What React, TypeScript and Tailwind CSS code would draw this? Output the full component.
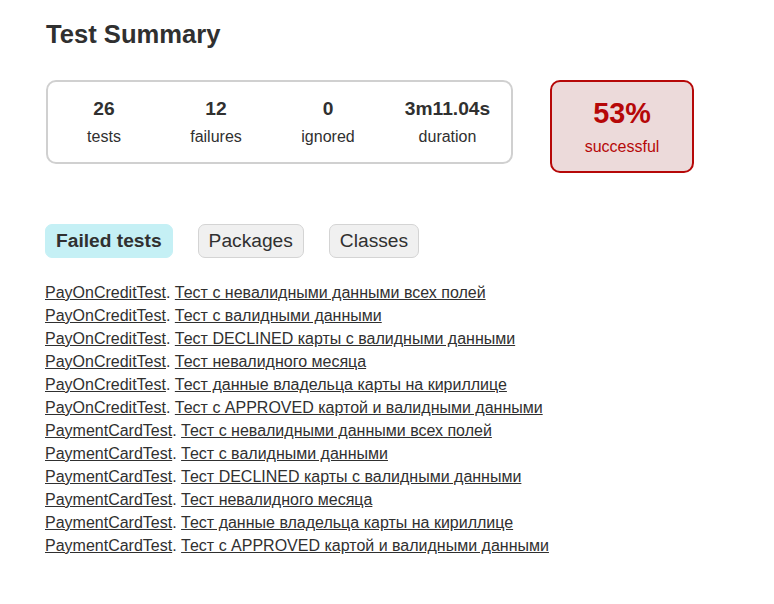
import React from 'react';

interface FailedTest {
  cls: string;
  name: string;
}

const failedTests: FailedTest[] = [
  { cls: 'PayOnCreditTest', name: 'Тест с невалидными данными всех полей' },
  { cls: 'PayOnCreditTest', name: 'Тест с валидными данными' },
  { cls: 'PayOnCreditTest', name: 'Тест DECLINED карты с валидными данными' },
  { cls: 'PayOnCreditTest', name: 'Тест невалидного месяца' },
  { cls: 'PayOnCreditTest', name: 'Тест данные владельца карты на кириллице' },
  { cls: 'PayOnCreditTest', name: 'Тест с APPROVED картой и валидными данными' },
  { cls: 'PaymentCardTest', name: 'Тест с невалидными данными всех полей' },
  { cls: 'PaymentCardTest', name: 'Тест с валидными данными' },
  { cls: 'PaymentCardTest', name: 'Тест DECLINED карты с валидными данными' },
  { cls: 'PaymentCardTest', name: 'Тест невалидного месяца' },
  { cls: 'PaymentCardTest', name: 'Тест данные владельца карты на кириллице' },
  { cls: 'PaymentCardTest', name: 'Тест с APPROVED картой и валидными данными' },
];

const counters = [
  { value: '26', label: 'tests', width: 'w-[110px]' },
  { value: '12', label: 'failures', width: 'w-[110px]' },
  { value: '0', label: 'ignored', width: 'w-[110px]' },
  { value: '3m11.04s', label: 'duration', width: 'w-[125px]' },
];

function InfoBox({ value, label, width }: { value: string; label: string; width: string }) {
  return (
    <div className={`${width} m-px py-[15px] text-center`}>
      <div className="text-[19.2px] leading-[22px] font-bold mb-2">{value}</div>
      <div className="leading-[18px]">{label}</div>
    </div>
  );
}

export default function App() {
  return (
    <div
      className="min-h-[604px] bg-white text-[#303030] text-[16px] px-[45px] pt-[19px] pb-[30px]"
      style={{ fontFamily: '"Liberation Sans", Arial, sans-serif' }}
    >
      <h1 className="text-[25.6px] leading-[30px] font-bold ml-px">Test Summary</h1>

      {/* Summary */}
      <div className="flex items-start mt-[31px] ml-px">
        <div className="flex border-2 border-[#d0d0d0] rounded-[10px]">
          {counters.map((c) => (
            <InfoBox key={c.label} {...c} />
          ))}
        </div>
        <div className="w-[144px] ml-[37px] border-2 border-[#b60808] bg-[#ecdada] rounded-[10px] py-[15px] text-center text-[#b60808]">
          <div className="text-[28.8px] leading-[33px] font-bold mb-2">53%</div>
          <div className="leading-[18px]">successful</div>
        </div>
      </div>

      {/* Tabs */}
      <ul className="flex mt-[51px]">
        <li className="px-[10px] py-[5px] mr-[25px] rounded-[7px] border border-[#c5f0f5] bg-[#c5f0f5]">
          <span className="block text-[19.2px] leading-[22px] font-bold">Failed tests</span>
        </li>
        <li className="px-[10px] py-[5px] mr-[25px] rounded-[7px] border border-[#d4d4d4] bg-[#f0f0f0]">
          <span className="block text-[19.2px] leading-[22px]">Packages</span>
        </li>
        <li className="px-[10px] py-[5px] mr-[25px] rounded-[7px] border border-[#d4d4d4] bg-[#f0f0f0]">
          <span className="block text-[19.2px] leading-[22px]">Classes</span>
        </li>
      </ul>

      {/* Failed tests list */}
      <ul className="mt-[26px]">
        {failedTests.map((t, i) => (
          <li key={i} className="leading-[18px] mb-[5px]">
            <a href="#" className="underline">{t.cls}</a>.{' '}
            <a href="#" className="underline">{t.name}</a>
          </li>
        ))}
      </ul>
    </div>
  );
}
